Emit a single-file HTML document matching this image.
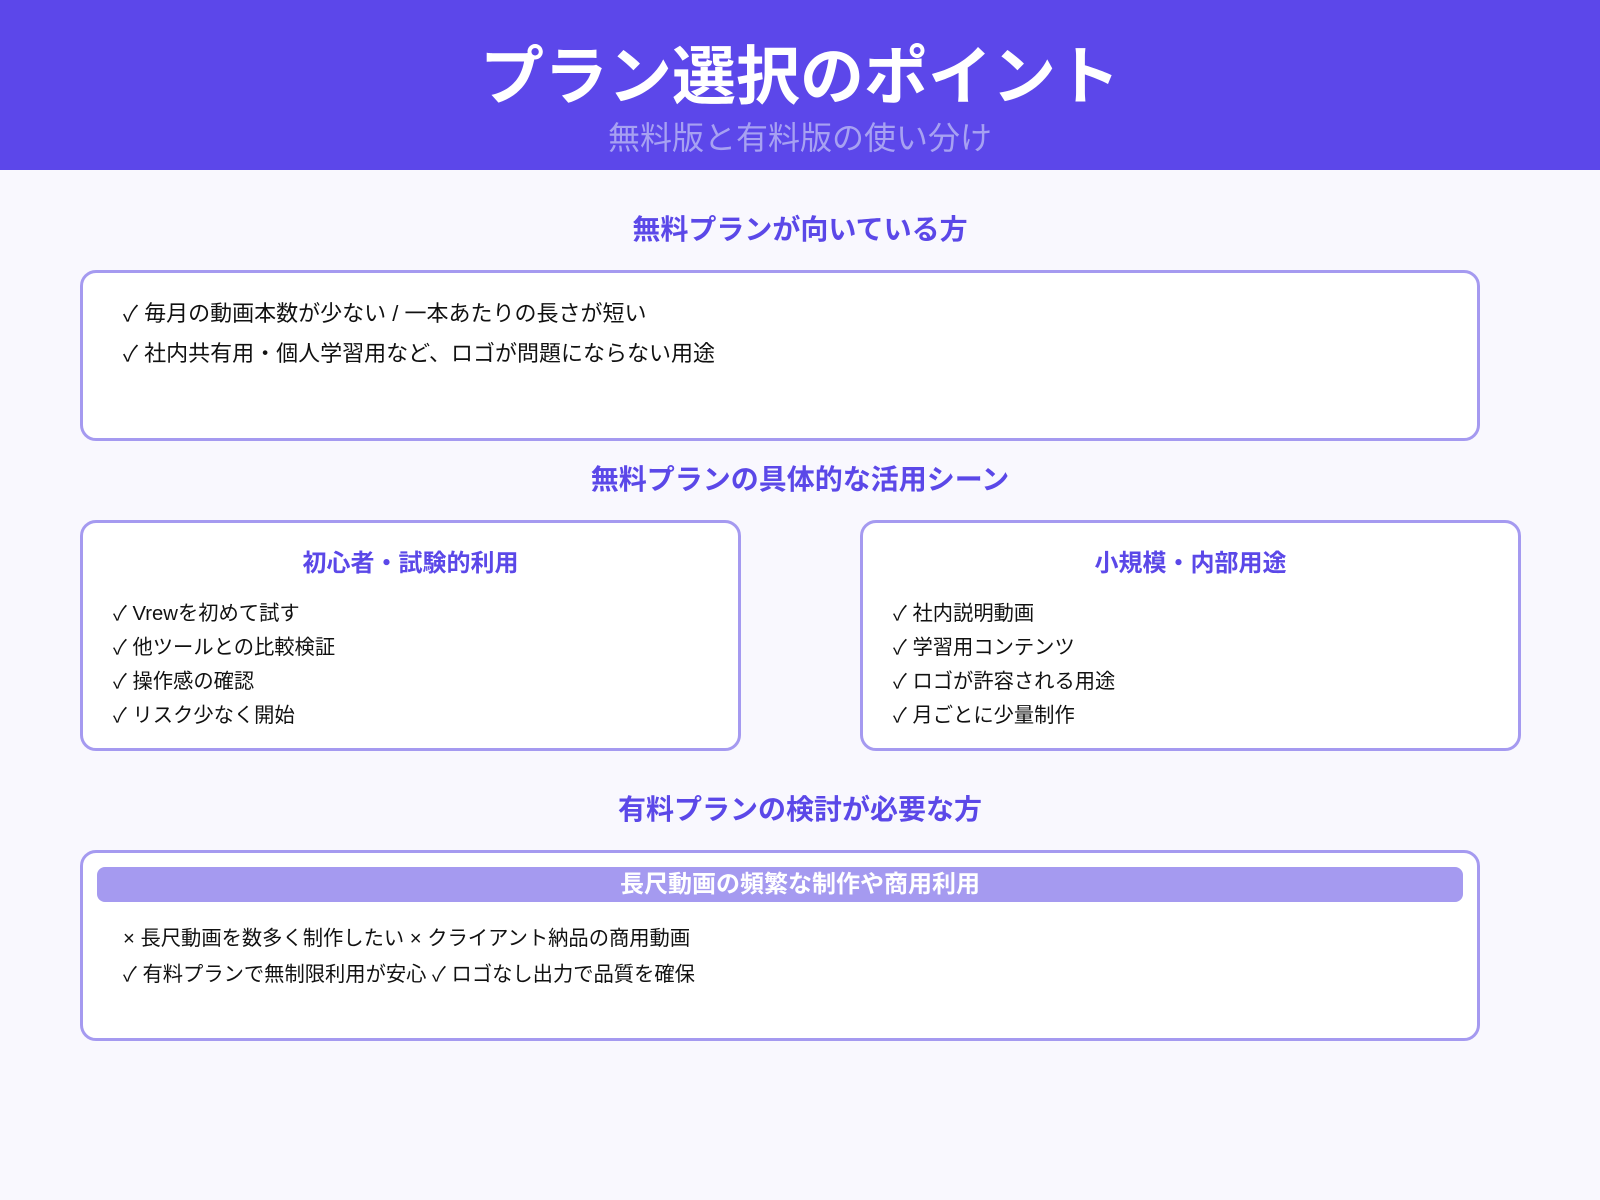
<!DOCTYPE html>
<html><head><meta charset="utf-8"><style>
*{margin:0;padding:0;box-sizing:border-box}
body{width:1600px;height:1200px;background:#f9f8fe;font-family:"Liberation Sans","Noto Sans CJK JP",sans-serif;position:relative;overflow:hidden;color:#111}
.hd{position:absolute;left:0;top:0;width:1600px;height:170px;background:#5c47ea;text-align:center}
.hd h1{position:absolute;top:38px;width:100%;font-size:64px;font-weight:700;color:#fff;line-height:78px}
.hd p{position:absolute;top:118px;width:100%;font-size:32px;color:#a7a1f2;line-height:40px}
.h2{position:absolute;width:1600px;text-align:center;font-size:28px;font-weight:700;color:#5b48e8;line-height:34px}
.box{position:absolute;background:#fff;border:3px solid #a59af0;border-radius:16px}
.ln{position:absolute;font-size:22px;line-height:28px;white-space:nowrap}
.ct{position:absolute;width:100%;text-align:center;font-size:24px;font-weight:700;color:#5b48e8;top:20px}
.it{position:absolute;left:30px;font-size:20.3px;line-height:26px;white-space:nowrap}
.bar{position:absolute;left:14px;right:14px;top:14px;height:35px;background:#a59af0;border-radius:8px;color:#fff;font-weight:700;font-size:24px;text-align:center;line-height:35px;padding-left:40px}
</style></head><body>
<div class="hd"><h1>プラン選択のポイント</h1><p>無料版と有料版の使い分け</p></div>
<div class="h2" style="top:213px">無料プランが向いている方</div>
<div class="box" style="left:80px;top:270px;width:1400px;height:171px">
<div class="ln" style="left:40px;top:27px">✓ 毎月の動画本数が少ない / 一本あたりの長さが短い</div>
<div class="ln" style="left:40px;top:67px">✓ 社内共有用・個人学習用など、ロゴが問題にならない用途</div>
</div>
<div class="h2" style="top:463px">無料プランの具体的な活用シーン</div>
<div class="box" style="left:80px;top:520px;width:661px;height:231px">
<div class="ct">初心者・試験的利用</div>
<div class="it" style="top:78px">✓ Vrewを初めて試す</div>
<div class="it" style="top:112px">✓ 他ツールとの比較検証</div>
<div class="it" style="top:146px">✓ 操作感の確認</div>
<div class="it" style="top:180px">✓ リスク少なく開始</div>
</div>
<div class="box" style="left:860px;top:520px;width:661px;height:231px">
<div class="ct">小規模・内部用途</div>
<div class="it" style="top:78px">✓ 社内説明動画</div>
<div class="it" style="top:112px">✓ 学習用コンテンツ</div>
<div class="it" style="top:146px">✓ ロゴが許容される用途</div>
<div class="it" style="top:180px">✓ 月ごとに少量制作</div>
</div>
<div class="h2" style="top:793px">有料プランの検討が必要な方</div>
<div class="box" style="left:80px;top:850px;width:1400px;height:191px">
<div class="bar">長尺動画の頻繁な制作や商用利用</div>
<div class="ln" style="left:40px;top:72px;font-size:20.3px">× 長尺動画を数多く制作したい × クライアント納品の商用動画</div>
<div class="ln" style="left:40px;top:108px;font-size:20.3px">✓ 有料プランで無制限利用が安心 ✓ ロゴなし出力で品質を確保</div>
</div>
</body></html>
